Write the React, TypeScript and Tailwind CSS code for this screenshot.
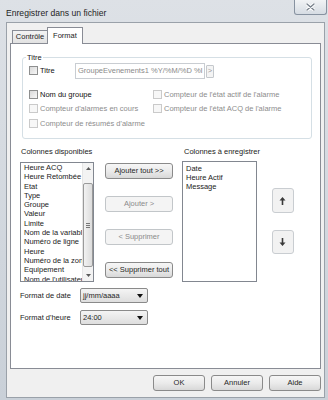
const left = [
  'Heure ACQ',
  'Heure Retombée',
  'Etat',
  'Type',
  'Groupe',
  'Valeur',
  'Limite',
  'Nom de la variable',
  'Numéro de ligne',
  'Heure',
  'Numéro de la zone',
  'Equipement',
  "Nom de l'utilisateur",
];

const right = ['Date', 'Heure Actif', 'Message'];

function Check({ disabled }: { disabled?: boolean }) {
  return (
    <span
      className={`inline-block w-[9px] h-[9px] border shrink-0 ${
        disabled
          ? 'border-[#cacaca] bg-[#f7f7f7]'
          : 'border-[#8e8f8f] bg-linear-to-br from-[#d9d9d9] to-[#f7f7f7]'
      }`}
    />
  );
}

function Btn({ label, disabled, className = '' }: { label: string; disabled?: boolean; className?: string }) {
  return (
    <div
      className={`flex items-center justify-center rounded-[3px] border whitespace-nowrap overflow-hidden ${
        disabled
          ? 'border-[#c2c6c9] bg-[#f4f4f4] text-[#8b8b8b]'
          : 'border-[#8a8a8a] bg-linear-to-b from-[#f6f6f6] via-[#ebebeb] to-[#d8d8d8] text-[#262626]'
      } ${className}`}
    >
      {label}
    </div>
  );
}

function Combo({ value }: { value: string }) {
  return (
    <div className="w-[68px] h-[15px] rounded-[2px] border border-[#8a8a8a] bg-linear-to-b from-[#f4f4f4] to-[#dedede] flex items-center justify-between pl-[2px] pr-[4px] text-[#262626]">
      <span>{value}</span>
      <svg width="6" height="4" viewBox="0 0 6 4">
        <path d="M0 0h6L3 4z" fill="#111" />
      </svg>
    </div>
  );
}

function Row({ children }: { children: React.ReactNode }) {
  return <div className="h-[14.5px] flex items-center">{children}</div>;
}

function Opt({ label, disabled, w }: { label: string; disabled?: boolean; w?: string }) {
  return (
    <div className={`flex items-center gap-[2px] ${w ?? ''} ${disabled ? 'text-[#8d8d8d]' : 'text-[#111]'}`}>
      <Check disabled={disabled} />
      <span className="whitespace-nowrap">{label}</span>
    </div>
  );
}

export default function App() {
  return (
    <div className="w-[328px] h-[400px] overflow-hidden flex flex-col bg-linear-to-b from-[#dde1e6] to-[#c9d0d8] font-['Liberation_Sans',Arial,sans-serif] text-[7.5px] leading-[9.3px] text-[#222]">
      {/* title bar */}
      <div className="h-[22px] shrink-0 flex items-start justify-between">
        <span className="text-[8.6px] leading-[10px] mt-[7.5px] ml-[6px] text-[#1e1e1e]">
          Enregistrer dans un fichier
        </span>
        <div className="w-[33px] h-[15px] mr-[1px] rounded-b-[3px] border border-t-0 border-[#8792a0] bg-linear-to-b from-[#f1f3f5] to-[#d6dce3] flex items-center justify-center">
          <svg width="9" height="8" viewBox="0 0 9 8">
            <path d="M1 1l7 6M8 1L1 7" stroke="#fff" strokeWidth="3" strokeLinecap="round" />
            <path d="M1 1l7 6M8 1L1 7" stroke="#7a838e" strokeWidth="1.4" strokeLinecap="round" />
          </svg>
        </div>
      </div>

      {/* client area */}
      <div className="flex-1 ml-[6px] mr-[3px] mb-[2px] border border-[#9aa1a9] bg-[#f0f0f0] flex flex-col">
        {/* tabs */}
        <div className="h-[20px] shrink-0 flex items-end pl-[5px]">
          <div className="w-[36px] h-[13px] border border-b-0 border-[#898c95] bg-linear-to-b from-[#f3f3f3] to-[#e2e2e2] flex items-center justify-center text-[#222]">
            Contrôle
          </div>
          <div className="relative z-10 -ml-px -mb-px w-[36px] h-[17px] border border-b-0 border-[#898c95] bg-white flex items-start justify-center pt-[3px]">
            Format
          </div>
        </div>

        {/* panel */}
        <div className="ml-[3px] w-[311px] h-[326px] shrink-0 border border-[#898c95] bg-white flex flex-col">
          {/* group box */}
          <div className="relative ml-[11px] mt-[13px] w-[290px] h-[82px] shrink-0 rounded-[3px] border border-[#d5dfe5] flex flex-col pl-[6px]">
            <span className="absolute left-[3px] -top-[5px] bg-white px-[1px] leading-[9px]">Titre</span>
            <div className="mt-[5px] h-[16px] flex items-center">
              <div className="w-[46px]">
                <Opt label="Titre" />
              </div>
              <div className="w-[130px] h-[16px] border border-[#c9cdd2] bg-white flex items-center pl-[2px] text-[#8a8a8a] whitespace-nowrap overflow-hidden">
                GroupeEvenements1 %Y/%M/%D %I
              </div>
              <div className="ml-[1px] w-[8px] h-[13px] border border-[#c4c8cc] rounded-[1px] bg-[#f4f4f4] text-[#9a9a9a] flex items-center justify-center">
                &gt;
              </div>
            </div>
            <div className="mt-[8px]">
              <Row>
                <Opt label="Nom du groupe" w="w-[124px]" />
                <Opt label="Compteur de l'état actif de l'alarme" disabled />
              </Row>
              <Row>
                <Opt label="Compteur d'alarmes en cours" disabled w="w-[124px]" />
                <Opt label="Compteur de l'état ACQ de l'alarme" disabled />
              </Row>
              <Row>
                <Opt label="Compteur de résumés d'alarme" disabled w="w-[124px]" />
              </Row>
            </div>
          </div>

          {/* columns */}
          <div className="mt-[8px] flex items-start">
            <div className="ml-[9px] flex flex-col">
              <span className="ml-[1px] h-[10px] leading-[10px] whitespace-nowrap">Colonnes disponibles</span>
              <div className="mt-[5px] w-[74px] h-[120px] border border-[#828790] bg-white flex overflow-hidden">
                <div className="flex-1 pl-[3px] overflow-hidden whitespace-nowrap">
                  {left.map((t) => (
                    <div key={t} className="h-[9.3px]">
                      {t}
                    </div>
                  ))}
                </div>
                <div className="w-[11px] shrink-0 bg-[#f3f3f3] border-l border-[#e6e6e6] flex flex-col items-center">
                  <div className="h-[11px] flex items-center justify-center">
                    <svg width="5" height="3" viewBox="0 0 5 3">
                      <path d="M0 3h5L2.5 0z" fill="#5a5a5a" />
                    </svg>
                  </div>
                  <div className="mt-[9px] w-[10px] h-[84px] rounded-[2px] border border-[#9a9a9a] bg-linear-to-r from-[#f2f2f2] to-[#dcdcdc] flex flex-col items-center justify-center gap-[1px]">
                    <span className="w-[4px] h-px bg-[#777]" />
                    <span className="w-[4px] h-px bg-[#777]" />
                    <span className="w-[4px] h-px bg-[#777]" />
                  </div>
                  <div className="mt-auto h-[11px] flex items-center justify-center">
                    <svg width="5" height="3" viewBox="0 0 5 3">
                      <path d="M0 0h5L2.5 3z" fill="#5a5a5a" />
                    </svg>
                  </div>
                </div>
              </div>
            </div>

            <div className="ml-[11px] mt-[16px] flex flex-col gap-[17px]">
              <Btn label="Ajouter tout >>" className="w-[68px] h-[16px]" />
              <Btn label="Ajouter >" disabled className="w-[68px] h-[16px]" />
              <Btn label="< Supprimer" disabled className="w-[68px] h-[16px]" />
              <Btn label="<< Supprimer tout" className="w-[68px] h-[16px]" />
            </div>

            <div className="ml-[9px] flex flex-col">
              <span className="ml-[2px] h-[10px] leading-[10px] whitespace-nowrap">Colonnes à enregistrer</span>
              <div className="mt-[4px] w-[75px] h-[121px] border border-[#828790] bg-white pl-[3px] pt-[1.5px]">
                {right.map((t) => (
                  <div key={t} className="h-[9.3px] whitespace-nowrap">
                    {t}
                  </div>
                ))}
              </div>
            </div>

            <div className="ml-[12px] mt-[41px] flex flex-col gap-[17px]">
              <div className="w-[22px] h-[25px] rounded-[3px] border border-[#c9cdd1] bg-[#f2f2f2] flex items-center justify-center">
                <svg width="7" height="8" viewBox="0 0 7 8">
                  <path d="M3.5 0L6.5 3.5H4.3V8H2.7V3.5H0.5z" fill="#3a3a3a" />
                </svg>
              </div>
              <div className="w-[22px] h-[24px] rounded-[3px] border border-[#c9cdd1] bg-[#f2f2f2] flex items-center justify-center">
                <svg width="7" height="8" viewBox="0 0 7 8">
                  <path d="M3.5 8L6.5 4.5H4.3V0H2.7V4.5H0.5z" fill="#3a3a3a" />
                </svg>
              </div>
            </div>
          </div>

          {/* formats */}
          <div className="mt-[6px] ml-[9px] flex items-center">
            <span className="w-[60px] whitespace-nowrap">Format de date</span>
            <Combo value="jj/mm/aaaa" />
          </div>
          <div className="mt-[7px] ml-[9px] flex items-center">
            <span className="w-[60px] whitespace-nowrap">Format d'heure</span>
            <Combo value="24:00" />
          </div>
        </div>

        {/* dialog buttons */}
        <div className="mt-[6px] mr-[3px] flex justify-end gap-[6px]">
          <Btn label="OK" className="w-[52px] h-[16px]" />
          <Btn label="Annuler" className="w-[52px] h-[16px]" />
          <Btn label="Aide" className="w-[52px] h-[16px]" />
        </div>
      </div>
    </div>
  );
}
